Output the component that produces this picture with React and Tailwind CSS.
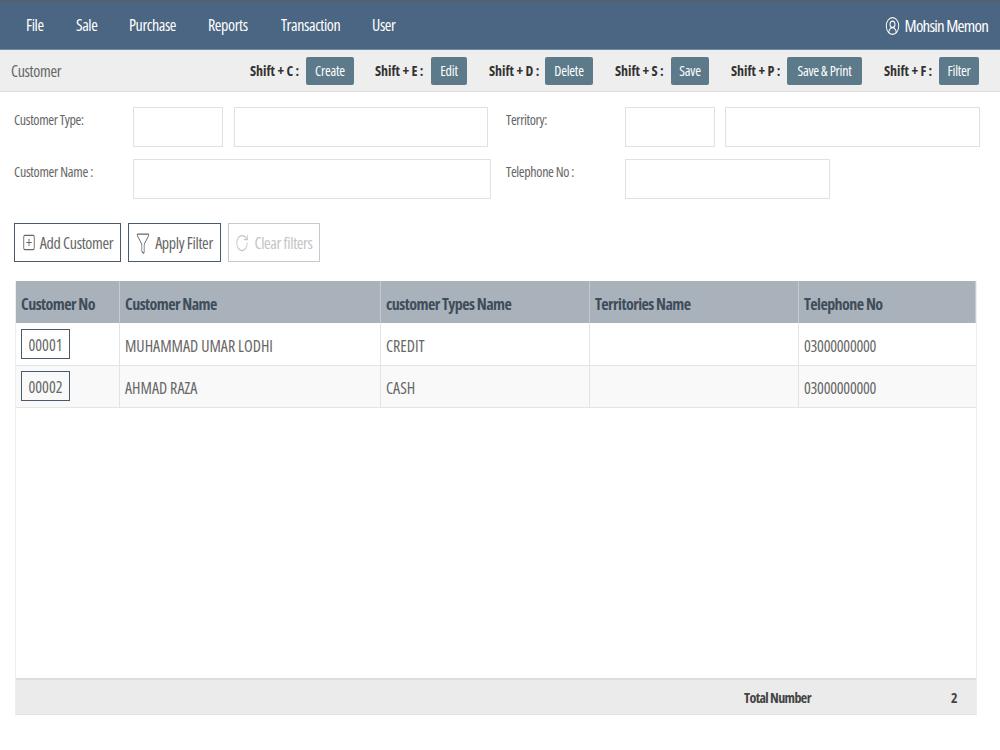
import React from 'react';
import { CircleUserRound, SquarePlus, Funnel, RotateCw } from 'lucide-react';

const menuItems = [
  { name: 'File', className: 'w-[50px] ml-[26px]' },
  { name: 'Sale', className: 'w-[53px]' },
  { name: 'Purchase', className: 'w-[79px]' },
  { name: 'Reports', className: 'w-[73px]' },
  { name: 'Transaction', className: 'w-[91px]' },
  { name: 'User', className: 'w-[40px]' }
];

const shortcuts = [
  { keys: 'Shift + C :', label: 'Create', className: 'w-[48px]', group: 'gap-[6px]' },
  { keys: 'Shift + E :', label: 'Edit', className: 'w-[36px]', group: 'gap-[6px] ml-[21px]' },
  { keys: 'Shift + D :', label: 'Delete', className: 'w-[48px]', group: 'gap-[6px] ml-[22px]' },
  { keys: 'Shift + S :', label: 'Save', className: 'w-[38px]', group: 'gap-[6px] ml-[22px]' },
  { keys: 'Shift + P :', label: 'Save & Print', className: 'w-[75px]', group: 'gap-[6px] ml-[22px]' },
  { keys: 'Shift + F :', label: 'Filter', className: 'w-[40px]', group: 'gap-[5px] ml-[22px]' }
];

const customers = [
  { no: '00001', name: 'MUHAMMAD UMAR LODHI', type: 'CREDIT', territory: '', phone: '03000000000' },
  { no: '00002', name: 'AHMAD RAZA', type: 'CASH', territory: '', phone: '03000000000' }
];

const Field = ({ className }) => (
  <input className={`h-[40px] border border-[#dfe1e8] bg-white ${className}`} />
);

const App = () => {
  return (
    <div className="w-[1000px] h-[750px] overflow-hidden bg-white text-[14px] text-[#666] font-['Open_Sans','Liberation_Sans',sans-serif] [font-stretch:75%]">
      {/* Top nav */}
      <nav className="flex items-center h-[50px] bg-[#4b6682] border-t-2 border-t-[#55606e] border-b border-b-[#6f8aa5] text-[16px] tracking-[-0.4px] text-white">
        {menuItems.map((item) => (
          <div key={item.name} className={`${item.className} -mt-[2px]`}>{item.name}</div>
        ))}
        <div className="ml-auto mr-[12px] flex items-center gap-[5px] text-[17px] tracking-[-0.8px]">
          <CircleUserRound className="w-[15px] h-[20px]" strokeWidth={1.5} preserveAspectRatio="none" />
          <span>Mohsin Memon</span>
        </div>
      </nav>

      {/* Shortcut toolbar */}
      <div className="flex items-center h-[42px] bg-[#eeeeee] border-b border-b-[#dddddd] pl-[11px] pr-[21px]">
        <span className="text-[16px] tracking-[-0.35px] text-[#666]">Customer</span>
        <div className="ml-auto flex items-center">
          {shortcuts.map((s) => (
            <div key={s.label} className={`flex items-center ${s.group}`}>
              <span className="w-[50px] whitespace-nowrap text-[14px] font-bold tracking-[-0.05px] text-[#333]">{s.keys}</span>
              <button className={`h-[28px] rounded-[2px] bg-[#5c7a8a] text-[14px] tracking-[-0.25px] text-white ${s.className}`}>
                {s.label}
              </button>
            </div>
          ))}
        </div>
      </div>

      {/* Filter form */}
      <div className="pt-[15px] pl-[14px]">
        <div className="flex">
          <label className="w-[119px] pt-[2px] text-[14px] tracking-[-0.35px]">Customer Type:</label>
          <Field className="w-[90px]" />
          <Field className="w-[254px] ml-[11px]" />
          <label className="w-[119px] ml-[18px] pt-[2px] text-[14px] tracking-[-0.35px]">Territory:</label>
          <Field className="w-[90px]" />
          <Field className="w-[255px] ml-[10px]" />
        </div>
        <div className="flex mt-[12px]">
          <label className="w-[119px] pt-[2px] text-[14px] tracking-[-0.3px]">Customer Name :</label>
          <Field className="w-[358px]" />
          <label className="w-[119px] ml-[15px] pt-[2px] text-[14px] tracking-[-0.35px]">Telephone No :</label>
          <Field className="w-[205px]" />
        </div>
        <div className="flex gap-[7px] mt-[24px]">
          <button className="flex items-center justify-center gap-[4px] w-[107px] h-[39px] border border-[#4a5a6a] text-[16px] tracking-[-0.35px] text-[#666]">
            <SquarePlus className="w-[14px] h-[19px]" strokeWidth={1.5} preserveAspectRatio="none" />
            Add Customer
          </button>
          <button className="flex items-center justify-center gap-[5px] w-[93px] h-[39px] border border-[#4a5a6a] text-[16px] tracking-[-0.35px] text-[#666]">
            <Funnel className="w-[14px] h-[24px]" strokeWidth={1.25} preserveAspectRatio="none" />
            Apply Filter
          </button>
          <button className="flex items-center justify-center gap-[5px] w-[92px] h-[39px] border border-[#c4cad0] text-[16px] tracking-[-0.35px] text-[#c2c4c6]">
            <RotateCw className="w-[14px] h-[20px]" strokeWidth={1.5} preserveAspectRatio="none" />
            Clear filters
          </button>
        </div>
      </div>

      {/* Customer table */}
      <div className="ml-[15px] mt-[19px] w-[962px] h-[434px] flex flex-col border-x border-x-[#eeeeee] border-b border-b-[#e2e2e2]">
        <div className="grid grid-cols-[104px_261px_209px_209px_1fr] h-[42px] bg-[#a9b1ba] text-[16px] tracking-[-0.55px] font-bold text-[#3f4d5b]">
          {['Customer No', 'Customer Name', 'customer Types Name', 'Territories Name', 'Telephone No'].map((title) => (
            <div key={title} className="flex items-center pl-[5px] pt-[3px] border-r border-r-[#c5cad0]">{title}</div>
          ))}
        </div>
        {customers.map((c, i) => (
          <div
            key={c.no}
            className={`grid grid-cols-[104px_261px_209px_209px_1fr] h-[42.5px] border-b border-b-[#e4e4e4] text-[16px] ${i % 2 ? 'bg-[#f9f9f9]' : 'bg-white'}`}
          >
            <div className="flex items-center pl-[5px] border-r border-r-[#e4e4e4]">
              <span className="flex items-center justify-center w-[49px] h-[30px] border border-[#4a5a6a] pt-[2px]">{c.no}</span>
            </div>
            <div className="flex items-center pl-[5px] pt-[4px] border-r border-r-[#e4e4e4]">{c.name}</div>
            <div className="flex items-center pl-[5px] pt-[4px] border-r border-r-[#e4e4e4]">{c.type}</div>
            <div className="flex items-center pl-[5px] pt-[4px] border-r border-r-[#e4e4e4]">{c.territory}</div>
            <div className="flex items-center pl-[5px] pt-[4px] tracking-[-0.25px]">{c.phone}</div>
          </div>
        ))}
        <div className="flex-1" />
        <div className="flex items-center h-[36px] bg-[#ecebec] border-t-2 border-t-[#dddddd] text-[14px] font-bold tracking-[-0.6px] text-[#444]">
          <span className="ml-[728px]">Total Number</span>
          <span className="ml-auto mr-[19px]">2</span>
        </div>
      </div>
    </div>
  );
};

export default App;
